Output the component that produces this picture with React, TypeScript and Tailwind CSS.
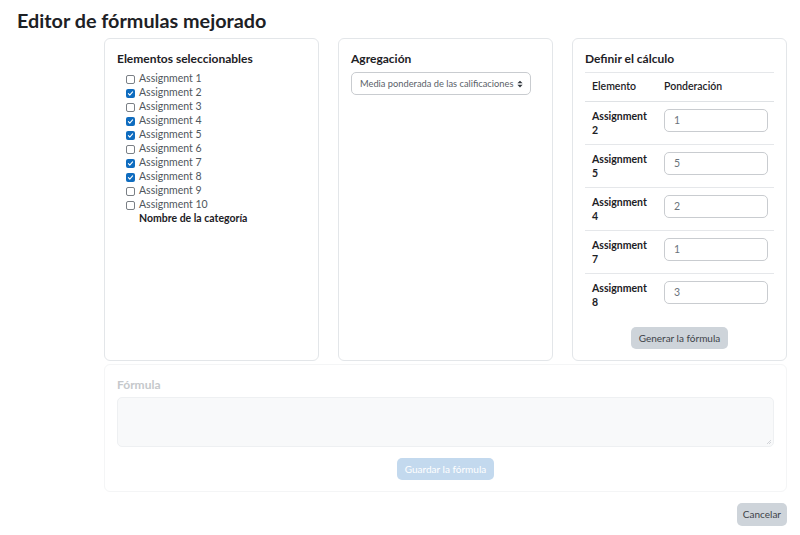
const ITEMS = [
  { name: "Assignment 1", checked: false },
  { name: "Assignment 2", checked: true },
  { name: "Assignment 3", checked: false },
  { name: "Assignment 4", checked: true },
  { name: "Assignment 5", checked: true },
  { name: "Assignment 6", checked: false },
  { name: "Assignment 7", checked: true },
  { name: "Assignment 8", checked: true },
  { name: "Assignment 9", checked: false },
  { name: "Assignment 10", checked: false },
];

const WEIGHTS = [
  { num: "2", value: "1" },
  { num: "5", value: "5" },
  { num: "4", value: "2" },
  { num: "7", value: "1" },
  { num: "8", value: "3" },
];

function CheckBox({ checked }: { checked: boolean }) {
  if (checked) {
    return (
      <span className="flex h-[9px] w-[9px] items-center justify-center rounded-[2px] bg-[#0f6cbf]">
        <svg viewBox="0 0 10 10" className="h-[7px] w-[7px]">
          <path d="M2 5.2 L4 7.2 L8 2.8" fill="none" stroke="white" strokeWidth="1.6" strokeLinecap="round" strokeLinejoin="round" />
        </svg>
      </span>
    );
  }
  return <span className="h-[9px] w-[9px] rounded-[2px] border border-[#7a7f85] bg-white" />;
}

export default function App() {
  return (
    <div className="min-h-[535px] bg-white pl-[17px] pr-[13px] pt-[8px] text-[#1d2125] [font-family:Lato,'Noto_Sans',sans-serif]">
      <h1 className="text-[19.8px] font-bold leading-[24px]">Editor de fórmulas mejorado</h1>

      <div className="ml-[87px] mt-[6px]">
        <div className="flex gap-[19px]">
          <div className="w-[215px] rounded-[6px] border border-[#e3e6e9] px-[12px] pt-[12px] pb-[12px]">
            <h2 className="text-[12px] font-bold leading-[16px]">Elementos seleccionables</h2>
            <ul className="mt-[5px] pl-[9px]">
              {ITEMS.map((it) => (
                <li key={it.name} className="flex h-[14px] items-center gap-[4px] text-[10.5px] text-[#4f565c]">
                  <CheckBox checked={it.checked} />
                  <span>{it.name}</span>
                </li>
              ))}
              <li className="flex h-[14px] items-center pl-[13px] text-[10.5px] font-bold text-[#1d2125]">
                Nombre de la categoría
              </li>
            </ul>
          </div>

          <div className="w-[215px] rounded-[6px] border border-[#e3e6e9] px-[12px] pt-[12px]">
            <h2 className="text-[12px] font-bold leading-[16px]">Agregación</h2>
            <div className="mt-[5px] flex h-[23px] w-[180px] items-center justify-between rounded-[5px] border border-[#c9ccd0] pl-[8px] pr-[7px] text-[9.3px] text-[#5a6168]">
              <span className="whitespace-nowrap">Media ponderada de las calificaciones</span>
              <svg viewBox="0 0 8 10" className="h-[8px] w-[6px] shrink-0">
                <path d="M4 0.5 L7.5 4 L0.5 4 Z M4 9.5 L7.5 6 L0.5 6 Z" fill="#343a40" />
              </svg>
            </div>
          </div>

          <div className="w-[215px] rounded-[6px] border border-[#e3e6e9] px-[12px] pt-[12px] pb-[11px]">
            <h2 className="text-[12px] font-bold leading-[16px]">Definir el cálculo</h2>
            <div className="mt-[5px] border-t border-[#e5e7ea]">
              <div className="flex h-[29px] items-center border-b border-[#dfe2e5] text-[10.5px] font-semibold">
                <span className="w-[79px] pl-[7px]">Elemento</span>
                <span>Ponderación</span>
              </div>
              {WEIGHTS.map((w, i) => (
                <div
                  key={w.num}
                  className={`flex h-[43px] items-start pt-[7px] ${i < WEIGHTS.length - 1 ? "border-b border-[#e5e7ea]" : ""}`}
                >
                  <div className="w-[79px] pl-[7px] text-[10.5px] font-bold leading-[14px]">
                    Assignment
                    <br />
                    {w.num}
                  </div>
                  <div className="flex h-[23px] w-[104px] items-center rounded-[5px] border border-[#c9ccd0] pl-[9px] text-[10.5px] text-[#6a737b]">
                    {w.value}
                  </div>
                </div>
              ))}
            </div>
            <div className="mt-[10px] flex justify-center">
              <button className="h-[22px] rounded-[5px] bg-[#ced4da] px-[8px] text-[10px] text-[#3d4349]">
                Generar la fórmula
              </button>
            </div>
          </div>
        </div>

        <div className="mt-[3px] rounded-[6px] border border-[#f4f5f6] px-[12px] pt-[12px] pb-[11px]">
          <h2 className="text-[12px] font-bold leading-[16px] text-[#c5c8cb]">Fórmula</h2>
          <div className="relative mt-[4px] h-[50px] rounded-[5px] border border-[#eef0f2] bg-[#f8f9fa]">
            <svg viewBox="0 0 6 6" className="absolute bottom-[1px] right-[1px] h-[6px] w-[6px]">
              <path d="M1 5 L5 1 M3 5 L5 3" stroke="#c9ccd0" strokeWidth="0.8" />
            </svg>
          </div>
          <div className="mt-[11px] flex justify-center">
            <button className="h-[22px] rounded-[5px] bg-[#c3d9ee] px-[8px] text-[10px] text-white">
              Guardar la fórmula
            </button>
          </div>
        </div>

        <div className="mt-[11px] flex justify-end">
          <button className="h-[23px] rounded-[5px] bg-[#ced4da] px-[6px] text-[10px] text-[#3d4349]">
            Cancelar
          </button>
        </div>
      </div>
    </div>
  );
}
